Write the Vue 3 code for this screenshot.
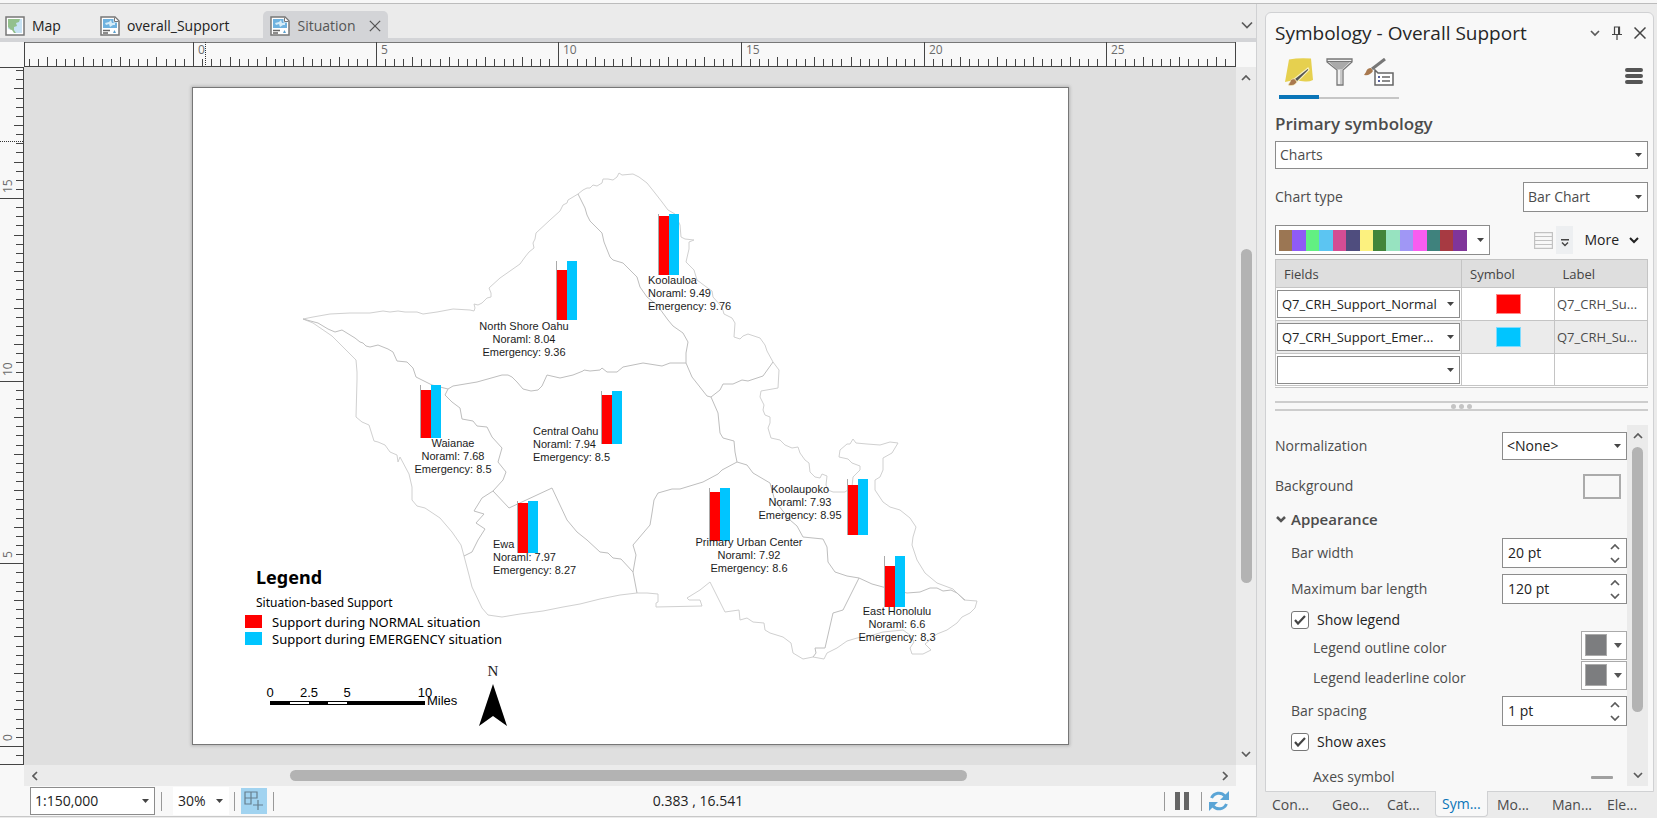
<script setup>
import { ref } from 'vue'

const UNIT = 36.53

function buildTicks(origin, from, to, direction) {
  const list = []
  for (let i = -20; i <= 120; i++) {
    const pos = origin + direction * i * (UNIT / 4)
    if (pos < from || pos > to) continue
    list.push({
      id: i,
      pos: Math.round(pos),
      size: i % 20 === 0 ? 25 : i % 4 === 0 ? 10 : 8,
      label: i % 20 === 0 ? String(i / 4) : ''
    })
  }
  return list
}
const topTicks = buildTicks(169, 3, 1210, 1)
const sideTicks = buildTicks(679, 2, 695, -1)

const tabs = [
  { name: 'Map', kind: 'map' },
  { name: 'overall_Support', kind: 'layout' },
  { name: 'Situation', kind: 'layout', active: true }
]

const coast =
  'M303 319L313 317L330 314L350 313L370 313L383 311L390 312L398 311L405 312L417 312L423 314L437 312L453 309L470 310L474 311L475 308L474 304L478 305L482 303L487 298L491 297L491 293L489 288L500 278L510 271L520 264L525 257L529 252L534 248L533 243L535 239L536 233L550 220L560 211L563 205L567 203L568 200L573 197L578 194L583 190L587 188L590 188L593 185L597 186L602 183L603 179L608 179L613 180L617 177L619 173L622 175L633 174L639 177L647 183L655 193L662 202L668 210L675 214L680 225L681 237L685 239L694 240L689 242L689 249L686 262L694 270L697 280L705 286L712 291L713 297L722 307L724 314L732 318L735 323L734 337L740 339L743 336L748 334L760 338L765 345L767 351L773 362L779 370L778 388L761 391L760 397L764 405L763 410L765 415L770 417L770 423L768 428L771 438L780 440L785 445L792 448L798 447L800 453L805 460L809 463L810 472L815 477L820 478L822 474L827 476L826 485L828 490L833 492L845 492L852 487L853 477L860 470L860 466L852 463L848 459L839 457L840 450L847 444L850 444L853 439L856 443L867 444L880 445L890 442L898 443L895 448L892 453L883 458L883 470L880 477L875 480L875 490L883 502L890 507L900 510L910 518L916 527L913 537L912 545L917 560L925 573L937 583L953 589L964 600L977 601L975 608L970 613L962 617L957 623L947 630L937 634L930 640L925 644L931 650L923 654L912 654L910 648L914 642L910 635L903 630L893 631L883 632L873 635L857 638L847 641L837 648L827 653L824 659L813 657L803 659L793 653L791 643L783 637L770 633L765 630L764 623L753 622L747 618L740 620L739 610L725 612L718 598L710 582L700 590L687 598L689 600L700 600L702 606L656 607L656 603L658 602L658 594L647 593L637 593L620 595L600 599L580 604L563 607L543 611L520 614L502 617L488 615L482 608L472 587L469 575L464 556L461 545L452 532L440 518L425 508L417 506L412 500L412 487L409 474L400 457L398 462L397 455L390 452L385 445L378 442L374 441L369 425L362 422L356 417L357 380L357 372L356 360L343 347L332 336L313 323Z'

const boundaries = [
  'M303 319L318 323L328 329L335 332L342 330L355 338L360 342L363 343L366 346L370 347L378 345L388 349L393 352L397 361L407 362L413 368L416 377L432 385L448 389',
  'M448 389L445 395L452 402L460 408L462 419L473 421L477 426L487 427L492 437L502 448L498 462L506 472L503 480L493 491L482 498L474 511L484 514L476 523L485 529L478 540L472 552L464 556',
  'M493 491L509 508L552 488L567 520L577 532L587 540L600 552L608 553L613 558L621 559L633 572L637 593',
  'M633 572L636 555L633 545L650 525L652 513L654 500L658 493L672 489L680 489L703 482L718 474L722 470L737 462',
  'M448 389L453 386L477 382L502 375L508 375L512 377L517 382L523 389L531 391L538 390L542 386L547 375L560 378L573 375L583 371L584 370L590 371L600 370L602 368L607 372L617 372L623 367L643 363L662 366L670 363L686 363',
  'M578 194L585 208L587 215L590 221L602 233L604 242L610 257L613 260L623 263L637 277L640 287L647 297L657 305L668 320L673 326L683 333L688 342L686 353L686 363L692 377L707 396L711 397L718 413L720 433L723 438L734 441L735 452L737 462',
  'M711 397L720 390L723 384L733 384L742 380L748 381L763 376L773 362',
  'M737 462L747 465L753 473L770 483L775 501L790 520L797 526L803 537L823 539L827 547L828 562L835 572L847 576L859 578L872 584L883 587L907 593L920 592L930 588L937 588L943 591L951 590L957 593L965 600',
  'M859 578L848 600L843 610L833 613L825 648L815 648L816 653L813 657'
]

const charts = [
  { name: 'North Shore Oahu', normal: '8.04', emergency: '9.36', x: 556, base: 320, nh: 50, eh: 59, lx: 524, ly: 330, anchor: 'middle' },
  { name: 'Koolauloa', normal: '9.49', emergency: '9.76', x: 658, base: 275, nh: 59, eh: 61, lx: 648, ly: 284, anchor: 'start' },
  { name: 'Central Oahu', normal: '7.94', emergency: '8.5', x: 601, base: 444, nh: 49, eh: 53, lx: 533, ly: 435, anchor: 'start' },
  { name: 'Waianae', normal: '7.68', emergency: '8.5', x: 420, base: 438, nh: 48, eh: 53, lx: 453, ly: 447, anchor: 'middle' },
  { name: 'Ewa', normal: '7.97', emergency: '8.27', x: 517, base: 553, nh: 50, eh: 52, lx: 493, ly: 548, anchor: 'start' },
  { name: 'Primary Urban Center', normal: '7.92', emergency: '8.6', x: 709, base: 541, nh: 49, eh: 53, lx: 749, ly: 546, anchor: 'middle' },
  { name: 'Koolaupoko', normal: '7.93', emergency: '8.95', x: 847, base: 535, nh: 50, eh: 56, lx: 800, ly: 493, anchor: 'middle' },
  { name: 'East Honolulu', normal: '6.6', emergency: '8.3', x: 884, base: 607, nh: 41, eh: 51, lx: 897, ly: 615, anchor: 'middle' }
]

const ramp = ['#9b7653', '#8f5bf5', '#62f082', '#5cc5f2', '#d44d94', '#4f4d7e', '#fcf17f', '#42843a', '#97e3c0', '#a097f5', '#f95df0', '#3f827d', '#a73a42', '#80359a']

const fields = [
  { field: 'Q7_CRH_Support_Normal', tone: 'red', label: 'Q7_CRH_Su...' },
  { field: 'Q7_CRH_Support_Emer...', tone: 'blue', label: 'Q7_CRH_Su...', selected: true },
  { field: '', tone: '', label: '' }
]

const barWidth = ref('20 pt')
const maxLength = ref('120 pt')
const barSpacing = ref('1 pt')
const showLegend = ref(true)
const showAxes = ref(true)
const paneTabs = ['Con...', 'Geo...', 'Cat...', 'Sym...', 'Mo...', 'Man...', 'Ele...']
</script>

<template>
  <div class="app">
    <div class="top-strip"></div>
    <div class="workspace">
      <main class="document">
        <nav class="tabs">
          <button v-for="t in tabs" :key="t.name" class="tab" :class="{ active: t.active }">
            <svg v-if="t.kind === 'map'" class="tab-icon" viewBox="0 0 20 20">
              <rect x="1" y="1" width="18" height="18" fill="#fff" stroke="#777" stroke-width="1.5" />
              <rect x="3" y="3" width="14" height="14" fill="#c7e2f3" />
              <path d="M3 3h12l-1 3-3 1 1 3-3 1v3l2 3H6l-1-4-2-2z" fill="#93c08c" />
              <path d="M3 13l4 1 2 3H3z" fill="#fff" />
            </svg>
            <svg v-else class="tab-icon" viewBox="0 0 20 20">
              <path d="M1 1h14l4 4v14H1z" fill="#fff" stroke="#777" stroke-width="1.5" />
              <path d="M3 3h10.500v3.500H17V12H3z" fill="#6fb2df" />
              <path d="M11 4l-2 2-4 1 1 2 3-1 1 3 3-2h2V7h-3z" fill="#d5ecf8" />
              <path d="M14.500 1.500v4h4" fill="#fff" stroke="#777" />
              <path d="M3 14.500h7M3 17h5" stroke="#666" stroke-width="1.300" />
              <path d="M13 17l1.500-3 1.500 3z" fill="#5b9fce" />
            </svg>
            <span>{{ t.name }}</span>
            <svg v-if="t.active" class="close" viewBox="0 0 14 14"><path d="M1 1l12 12M13 1L1 13" stroke="#555" stroke-width="1.500" /></svg>
          </button>
          <button class="tab-menu" aria-label="Open views"><svg width="12" height="8" viewBox="0 0 12 8"><path d="M1 1.500l5 5 5-5" class="stroke" /></svg></button>
        </nav>
        <div class="view">
          <div class="corner"></div>
          <svg class="ruler-top">
            <line x1="0" x2="100%" y1="0.500" y2="0.500" stroke="#777" />
            <line x1="0" x2="100%" y1="24.500" y2="24.500" stroke="#444" />
            <line x1="0.500" x2="0.500" y1="0" y2="25" stroke="#444" />
            <line x1="100%" x2="100%" y1="0" y2="25" stroke="#444" stroke-width="2" />
            <g v-for="t in topTicks" :key="t.id">
              <rect :x="t.pos" :y="25 - t.size" width="1" :height="t.size" fill="#444" />
              <text v-if="t.label" :x="t.pos + 5" y="12" class="ruler-text">{{ t.label }}</text>
            </g>
            <line x1="181.500" x2="181.500" y1="0" y2="24" stroke="#333" stroke-dasharray="1 1" />
          </svg>
          <div class="corner"></div>
          <svg class="ruler-side">
            <line x1="23.500" x2="23.500" y1="0" y2="100%" stroke="#444" />
            <line x1="0" x2="24" y1="0.500" y2="0.500" stroke="#444" />
            <line x1="0" x2="24" y1="100%" y2="100%" stroke="#444" stroke-width="2" />
            <g v-for="t in sideTicks" :key="t.id">
              <rect :x="24 - t.size" :y="t.pos" :width="t.size" height="1" fill="#444" />
              <text v-if="t.label" class="ruler-text" :transform="`translate(12 ${t.pos - 5}) rotate(-90)`">{{ t.label }}</text>
            </g>
            <line x1="0" x2="23" y1="74.500" y2="74.500" stroke="#333" stroke-dasharray="1 1" />
          </svg>
          <section class="canvas">
            <svg class="paper" viewBox="193 88 875 656" role="img" aria-label="Map layout">
              <path :d="coast" fill="none" stroke="#d0d0d0" />
              <path v-for="(d, i) in boundaries" :key="i" :d="d" fill="none" stroke="#bebebe" />
              <g v-for="c in charts" :key="c.name">
                <rect :x="c.x" :y="c.base - c.eh" width="1" :height="c.eh" fill="#aaa" />
                <rect :x="c.x + 1" :y="c.base - c.nh" width="10" :height="c.nh" fill="#f00" />
                <rect :x="c.x + 11" :y="c.base - c.eh" width="10" :height="c.eh" fill="#00c5ff" />
                <text class="map-label" :text-anchor="c.anchor">
                  <tspan :x="c.lx" :y="c.ly">{{ c.name }}</tspan>
                  <tspan :x="c.lx" :y="c.ly + 13">Noraml: {{ c.normal }}</tspan>
                  <tspan :x="c.lx" :y="c.ly + 26">Emergency: {{ c.emergency }}</tspan>
                </text>
              </g>
              <text x="256" y="584" class="legend-title">Legend</text>
              <text x="256" y="607" class="legend-sub">Situation-based Support</text>
              <rect x="245" y="615" width="17" height="13" fill="#f00" />
              <rect x="245" y="632" width="17" height="13" fill="#00c5ff" />
              <text x="272" y="627" class="legend-item">Support during NORMAL situation</text>
              <text x="272" y="644" class="legend-item">Support during EMERGENCY situation</text>
              <g class="scale-text">
                <text x="270" y="697" text-anchor="middle">0</text>
                <text x="309" y="697" text-anchor="middle">2.5</text>
                <text x="347" y="697" text-anchor="middle">5</text>
                <text x="425" y="697" text-anchor="middle">10</text>
                <text x="427" y="705">Miles</text>
              </g>
              <rect x="270" y="701" width="155" height="4" />
              <rect x="290" y="702" width="19" height="2" fill="#fff" />
              <rect x="328" y="702" width="19" height="2" fill="#fff" />
              <text x="493" y="676" class="north" text-anchor="middle">N</text>
              <path d="M493 684L507 726L493 716L479 726Z" />
            </svg>
          </section>
          <div class="scroll-v">
            <svg width="10" height="6" viewBox="0 0 10 6"><path d="M1 5l4-4 4 4" class="stroke" /></svg>
            <div class="track-v"><div class="thumb thumb-map-v"></div></div>
            <svg width="10" height="6" viewBox="0 0 10 6"><path d="M1 1l4 4 4-4" class="stroke" /></svg>
          </div>
          <div class="corner"></div>
          <div class="scroll-h">
            <svg width="6" height="10" viewBox="0 0 6 10"><path d="M5 1L1 5l4 4" class="stroke" /></svg>
            <div class="track-h"><div class="thumb thumb-map-h"></div></div>
            <svg width="6" height="10" viewBox="0 0 6 10"><path d="M1 1l4 4-4 4" class="stroke" /></svg>
          </div>
          <div class="corner"></div>
        </div>
        <footer class="status">
          <span class="select scale-select">
            <select aria-label="Map scale"><option>1:150,000</option></select>
            <svg class="arrow" viewBox="0 0 7 4"><path d="M0 0h7L3.500 4z" /></svg>
          </span>
          <i class="sep"></i>
          <span class="select zoom-select">
            <select aria-label="Page zoom"><option>30%</option></select>
            <svg class="arrow" viewBox="0 0 7 4"><path d="M0 0h7L3.500 4z" /></svg>
          </span>
          <i class="sep sep-zoom"></i>
          <button class="snap" aria-label="Snapping">
            <svg width="20" height="20" viewBox="0 0 20 20" fill="none" stroke="#667f8e" stroke-width="1.200"><path d="M1 1h12v6H1zM1 7v6h6V1M14 9v10M9 14h10" /></svg>
          </button>
          <i class="sep"></i>
          <span class="coords">0.383 , 16.541</span>
          <i class="sep"></i>
          <button class="plain pause" aria-label="Pause drawing"><svg width="14" height="18" viewBox="0 0 14 18"><path d="M0 0h5v18H0zM9 0h5v18H9z" fill="#666" /></svg></button>
          <i class="sep"></i>
          <button class="plain refresh" aria-label="Refresh">
            <svg width="20" height="20" viewBox="0 0 20 20"><path d="M2.500 7C5 1.500 12 .5 16 5" fill="none" stroke="#5ba5d6" stroke-width="3" /><path d="M20 0v9h-9z" fill="#5ba5d6" /><path d="M17.500 13C15 18.500 8 19.500 4 15" fill="none" stroke="#5ba5d6" stroke-width="3" /><path d="M0 20v-9h9z" fill="#5ba5d6" /></svg>
          </button>
        </footer>
      </main>

      <aside class="side">
        <div class="panel">
          <header class="panel-head">
            <h1>Symbology - Overall Support</h1>
            <button class="plain" aria-label="Panel menu"><svg width="10" height="7" viewBox="0 0 10 7"><path d="M1 1l4 4 4-4" class="stroke" /></svg></button>
            <button class="plain" aria-label="Auto hide"><svg width="10" height="14" viewBox="0 0 10 14"><path d="M2.500 8.500V1h5v7.500M0 8.500h10M5 8.500V14" fill="none" stroke="#444" stroke-width="1.200" /><path d="M6 1h1.500v7H6z" fill="#444" /></svg></button>
            <button class="plain" aria-label="Close panel"><svg width="12" height="12" viewBox="0 0 12 12"><path d="M.5.5l11 11M11.500.5L.5 11.500" stroke="#444" stroke-width="1.500" /></svg></button>
          </header>
          <div class="modes">
            <button class="mode on" aria-label="Primary symbology">
              <svg width="28" height="28" viewBox="0 0 28 28"><path d="M4 1.500q10-2 22-1L28 22q-4 2-8 1.500t-9-1T0 24z" fill="#e6d04f" /><path d="M23 10L9 21l3 3L24 12z" fill="#555" stroke="#f8f1c0" stroke-width="1.200" /><path d="M10 21q-4-1-5 3l-2 3q6 2 9-3z" fill="#a9794f" stroke="#f8f1c0" stroke-width=".7" /></svg>
            </button>
            <button class="mode" aria-label="Vary symbology">
              <svg width="27" height="28" viewBox="0 0 27 28"><path d="M1 1h25v3l-9 8v15h-6V12L1 4z" fill="#efefef" stroke="#777" stroke-width="1.300" /><path d="M3 4h21l-8 7.500h-5z" fill="#aaa" /><path d="M1 3.500h25" stroke="#777" /><path d="M14 12h2v14h-2z" fill="#c9c9c9" /></svg>
            </button>
            <button class="mode" aria-label="Symbol display">
              <svg width="30" height="28" viewBox="0 0 30 28"><path d="M21 1L8 11" stroke="#777" stroke-width="3" /><path d="M7 10q-4 0-5 4l-2 3q6 1 9-4z" fill="#a9794f" /><path d="M11 12l3 3h15v12H11z" fill="#fff" stroke="#666" stroke-width="1.500" /><path d="M14 19h2M14 23h2" stroke="#555f9c" stroke-width="2" /><path d="M18 19h8M18 23h8" stroke="#666" stroke-width="1.500" /></svg>
            </button>
            <button class="plain burger" aria-label="Options"><svg width="18" height="16" viewBox="0 0 18 16"><path d="M2 2h14M2 8h14M2 14h14" stroke="#555" stroke-width="4" stroke-linecap="round" /></svg></button>
          </div>
          <h2>Primary symbology</h2>
          <span class="select wide">
            <select aria-label="Primary symbology"><option>Charts</option></select>
            <svg class="arrow" viewBox="0 0 7 4"><path d="M0 0h7L3.500 4z" /></svg>
          </span>
          <div class="chart-type">
            <label for="chart-type">Chart type</label>
            <span class="select tall">
              <select id="chart-type"><option>Bar Chart</option></select>
              <svg class="arrow" viewBox="0 0 7 4"><path d="M0 0h7L3.500 4z" /></svg>
            </span>
          </div>
          <div class="scheme">
            <button class="ramp" aria-label="Color scheme">
              <span class="ramp-bar"><i v-for="c in ramp" :key="c" :style="{ background: c }"></i></span>
              <svg class="arrow" viewBox="0 0 7 4"><path d="M0 0h7L3.500 4z" /></svg>
            </button>
            <button class="plain grid-btn" aria-label="Add values"><svg width="19" height="17" viewBox="0 0 19 17" fill="none" stroke="#c2c2c2" stroke-width="1.200"><path d="M.6.6h17.800v15.800H.6zM1 4.500h17M1 8.500h17M1 12.500h17" /></svg></button>
            <button class="expand" aria-label="Add options"><svg width="8" height="8" viewBox="0 0 8 8"><path d="M0 .7h8M1 3.500l3 3 3-3" fill="none" stroke="#444" stroke-width="1.400" /></svg></button>
            <button class="plain more">More <svg width="10" height="7" viewBox="0 0 10 7"><path d="M1 1l4 4 4-4" fill="none" stroke="#222" stroke-width="2" /></svg></button>
          </div>
          <table>
            <thead>
              <tr><th>Fields</th><th>Symbol</th><th>Label</th></tr>
            </thead>
            <tbody>
              <tr v-for="(f, i) in fields" :key="i" :class="{ selected: f.selected }">
                <td>
                  <span class="select field">
                    <select :aria-label="`Field ${i + 1}`"><option>{{ f.field }}</option></select>
                    <svg class="arrow" viewBox="0 0 7 4"><path d="M0 0h7L3.500 4z" /></svg>
                  </span>
                </td>
                <td><button v-if="f.tone" class="swatch" :class="f.tone" :aria-label="`Symbol ${i + 1}`"></button></td>
                <td>{{ f.label }}</td>
              </tr>
            </tbody>
          </table>
          <div class="splitter"><i></i><i></i><i></i></div>
          <div class="options">
            <div class="rows">
              <div class="row r-norm">
                <label for="norm">Normalization</label>
                <span class="select num"><select id="norm" class="dark"><option>&lt;None&gt;</option></select><svg class="arrow" viewBox="0 0 7 4"><path d="M0 0h7L3.500 4z" /></svg></span>
              </div>
              <div class="row r-back"><label for="back">Background</label><button id="back" class="back-btn"></button></div>
              <h3><svg width="10" height="7" viewBox="0 0 10 7"><path d="M1 1l4 4 4-4" fill="none" stroke="#555" stroke-width="2.500" /></svg>Appearance</h3>
              <div class="row in r-width">
                <label for="bw">Bar width</label>
                <span class="spin"><input id="bw" v-model="barWidth" type="text" /><span class="steps"><button aria-label="Increase bar width"><svg viewBox="0 0 10 6"><path d="M1 5l4-4 4 4" class="stroke" /></svg></button><button aria-label="Decrease bar width"><svg viewBox="0 0 10 6"><path d="M1 1l4 4 4-4" class="stroke" /></svg></button></span></span>
              </div>
              <div class="row in r-len">
                <label for="ml">Maximum bar length</label>
                <span class="spin"><input id="ml" v-model="maxLength" type="text" /><span class="steps"><button aria-label="Increase bar length"><svg viewBox="0 0 10 6"><path d="M1 5l4-4 4 4" class="stroke" /></svg></button><button aria-label="Decrease bar length"><svg viewBox="0 0 10 6"><path d="M1 1l4 4 4-4" class="stroke" /></svg></button></span></span>
              </div>
              <label class="check c-legend"><input v-model="showLegend" type="checkbox" /><svg v-if="showLegend" class="tick" viewBox="0 0 12 10"><path d="M1 5l3 3.500L11 1" /></svg><span>Show legend</span></label>
              <div class="row in2 r-color"><label for="oc">Legend outline color</label><button id="oc" class="color"><i></i><svg viewBox="0 0 8 5"><path d="M0 0h8L4 5z" /></svg></button></div>
              <div class="row in2 r-color"><label for="lc">Legend leaderline color</label><button id="lc" class="color"><i></i><svg viewBox="0 0 8 5"><path d="M0 0h8L4 5z" /></svg></button></div>
              <div class="row in r-norm">
                <label for="bs">Bar spacing</label>
                <span class="spin"><input id="bs" v-model="barSpacing" type="text" /><span class="steps"><button aria-label="Increase bar spacing"><svg viewBox="0 0 10 6"><path d="M1 5l4-4 4 4" class="stroke" /></svg></button><button aria-label="Decrease bar spacing"><svg viewBox="0 0 10 6"><path d="M1 1l4 4 4-4" class="stroke" /></svg></button></span></span>
              </div>
              <label class="check"><input v-model="showAxes" type="checkbox" /><svg v-if="showAxes" class="tick" viewBox="0 0 12 10"><path d="M1 5l3 3.500L11 1" /></svg><span>Show axes</span></label>
              <div class="row in2 r-axes"><label for="ax">Axes symbol</label><button id="ax" class="plain axis-btn"><svg width="22" height="3"><rect width="22" height="3" rx="1" fill="#a0a0a0" /></svg></button></div>
            </div>
            <div class="scroll-v options-scroll">
              <svg width="10" height="6" viewBox="0 0 10 6"><path d="M1 5l4-4 4 4" class="stroke" /></svg>
              <div class="track-v"><div class="thumb thumb-options"></div></div>
              <svg width="10" height="6" viewBox="0 0 10 6"><path d="M1 1l4 4 4-4" class="stroke" /></svg>
            </div>
          </div>
        </div>
        <nav class="pane-tabs">
          <button v-for="p in paneTabs" :key="p" :class="{ on: p === 'Sym...' }">{{ p }}</button>
        </nav>
      </aside>
    </div>
  </div>
</template>

<style>
body { background: #ebebeb; }
</style>

<style scoped>
* { box-sizing: border-box; }
.app { height: 100vh; display: flex; flex-direction: column; background: #ebebeb; color: #4c4c4c; font: 14px/20px "Open Sans", "Noto Sans", sans-serif; overflow: hidden; }
.app svg { display: block; flex: none; }
button, input, select { font: inherit; color: inherit; margin: 0; padding: 0; border-radius: 0; }
button { border: 0; background: none; }
.stroke { fill: none; stroke: #5a5a5a; stroke-width: 1.7; }
.top-strip { height: 4px; background: #f7f7f7; border-bottom: 1px solid #bcbcbc; flex: none; }
.workspace { flex: 1; min-height: 0; display: flex; gap: 8px; padding-right: 3px; }
.document { flex: 1; min-width: 0; display: flex; flex-direction: column; margin-bottom: 1px; border-right: 1px solid #d0d1d3; border-bottom: 1px solid #c8c8c8; background: #f8f8f8; }

.tabs { height: 38px; display: flex; align-items: flex-end; background: #ebebeb; border-bottom: 4px solid #d3d4d7; padding-right: 1px; flex: none; }
.tab { height: 27px; display: flex; align-items: center; gap: 7px; padding: 3px 25px 0 5px; margin-right: 9px; color: #222; }
.tab.active { background: #d3d4d7; border-radius: 5px 5px 0 0; color: #555; padding: 3px 7px 0; margin-right: auto; }
.tab-icon { width: 20px; height: 20px; }
.close { width: 12px; height: 12px; margin-left: 6px; }
.tab-menu { width: 14px; height: 27px; display: flex; align-items: center; padding-top: 1px; }

.view { flex: 1; min-height: 0; display: grid; grid-template-columns: 24px 1fr 20px; grid-template-rows: 25px 1fr 21px; }
.ruler-top { width: 100%; height: 25px; overflow: hidden; }
.ruler-side { width: 24px; height: 100%; overflow: hidden; }
.ruler-text { font-size: 12px; fill: #6b6b6b; }
.canvas { background: #dfdfdf; display: flex; align-items: center; justify-content: center; overflow: hidden; min-width: 0; min-height: 0; }
.paper { width: 877px; background: #fff; border: 1px solid #777; box-shadow: 0 0 3px 1px #b5b5b5; }
.map-label { font: 11px "Liberation Sans", sans-serif; fill: #1c1c1c; }
.legend-title { font: bold 18px "Noto Sans", sans-serif; fill: #000; }
.legend-sub { font: 12px "Noto Sans", sans-serif; fill: #000; }
.legend-item { font: 13px "Noto Sans", sans-serif; fill: #000; }
.scale-text { font: 13px "Liberation Sans", sans-serif; }
.north { font: 15px "Liberation Serif", serif; fill: #222; }

.scroll-v { background: #ebebeb; display: flex; flex-direction: column; align-items: center; padding: 8px 0; min-height: 0; }
.track-v { flex: 1; width: 11px; margin: 8px 0; min-height: 0; }
.scroll-h { background: #ebebeb; display: flex; align-items: center; padding: 0 8px; min-width: 0; }
.track-h { flex: 1; height: 11px; margin: 0 8px; }
.thumb { background: #b3b3b3; border-radius: 6px; }
.thumb-map-v { height: 51%; margin-top: 160px; }
.thumb-map-h { width: 58%; height: 11px; margin-left: 244px; }

.status { height: 30px; display: flex; align-items: center; padding-left: 30px; color: #222; background: #f8f8f8; flex: none; }
.sep { width: 1px; height: 19px; background: #999; margin: 0 6px; }
.scale-select { width: 125px; height: 28px; }
.status .zoom-select { width: 56px; height: 28px; border-color: #fff; margin-left: 5px; }
.status .zoom-select select { padding-left: 4px; }
.sep-zoom { margin-left: 5px; }
.snap { width: 26px; height: 26px; background: #a1d3f0; display: flex; align-items: center; justify-content: center; }
.coords { flex: 1; text-align: center; padding-right: 42px; }
.plain { display: flex; align-items: center; justify-content: center; }
.pause { width: 20px; margin: 0 3px 0 1px; }
.refresh { margin: 0 27px 0 1px; }

.select { display: grid; grid-template: 1fr / 1fr auto; align-items: center; background: #fff; border: 1px solid #8c8c8c; }
.select select { grid-area: 1 / 1 / 2 / 3; appearance: none; border: 0; background: transparent; width: 100%; height: 100%; padding: 0 0 0 4px; }
.select .arrow { grid-area: 1 / 2; }
.arrow { width: 7px; height: 4px; margin-right: 5px; fill: #444; pointer-events: none; }
.select .dark { color: #222; }

.side { width: 389px; display: flex; flex-direction: column; flex: none; padding-top: 8px; }
.panel { flex: 1; min-height: 0; display: flex; flex-direction: column; background: #f8f8f8; border: 1px solid #d0d1d3; border-radius: 6px 6px 0 0; padding: 0 5px 5px 9px; }
.panel-head { height: 40px; display: flex; align-items: center; gap: 12px; padding-right: 2px; flex: none; }
h1 { flex: 1; font-size: 19px; font-weight: 400; line-height: 26px; margin: 0; color: #262626; }
.modes { display: flex; height: 46px; padding: 0 5px 0 4px; flex: none; }
.mode { width: 40px; height: 46px; border-bottom: 2px solid #c6c6c6; display: flex; align-items: flex-start; justify-content: center; padding-top: 5px; }
.mode.on { border-bottom: 4px solid #0a75b8; }
.burger { margin-left: auto; height: 46px; }
h2 { font-size: 17px; line-height: 24px; font-weight: 600; margin: 13px 0 5px; }
.wide { height: 28px; }
.chart-type { display: flex; justify-content: space-between; align-items: center; margin: 13px 0; }
.tall { width: 125px; height: 30px; }
.scheme { display: flex; align-items: center; }
.ramp { width: 215px; height: 30px; background: #fff; border: 1px solid #8c8c8c; display: flex; align-items: center; justify-content: space-between; padding-left: 3px; }
.ramp-bar { display: flex; width: 188px; height: 21px; }
.ramp-bar i { flex: 1; }
.grid-btn { margin-left: 44px; }
.expand { width: 17px; height: 28px; background: #edeff1; margin-left: 3px; display: flex; align-items: center; justify-content: center; padding-top: 6px; }
.more { gap: 10px; margin-left: auto; margin-right: 9px; color: #222; }
table { border-collapse: collapse; table-layout: fixed; width: 100%; margin-top: 4px; border: 1px solid #c4c4c4; border-bottom: 3px double #c4c4c4; font-size: 13px; flex: none; }
th { background: #dedede; height: 28px; text-align: left; font-weight: 400; padding: 0 8px; border-right: 1px solid #c4c4c4; color: #444; }
th:first-child { width: 186px; }
th:nth-child(2) { width: 93px; border-right: 0; }
td { height: 33px; padding: 0 2px; background: #fff; border: 1px solid #c4c4c4; }
td:first-child { padding: 0 1px; }
td:nth-child(2) { text-align: center; }
.selected td { background: #ebebeb; }
.field { height: 28px; color: #222; }
.swatch { width: 25px; height: 20px; display: block; margin: 0 auto; border: 1px solid #f88; }
.red { background: #f00; }
.blue { background: #00c5ff; border-color: #7fdcff; }
.splitter { height: 10px; margin: 13px 0 14px; border: solid #cdcdcd; border-width: 2px 0; display: flex; align-items: center; justify-content: center; gap: 3px; flex: none; }
.splitter i { width: 5px; height: 5px; border-radius: 50%; background: #c4c4c4; }
.options { flex: 1; min-height: 0; display: flex; overflow: hidden; }
.rows { flex: 1; min-width: 0; overflow: hidden; }
.row { display: flex; align-items: center; justify-content: space-between; }
.in { padding-left: 16px; }
.in2 { padding-left: 38px; }
.r-norm { height: 42px; }
.r-back { height: 38px; padding-right: 6px; }
.r-width { height: 40px; }
.r-len { height: 32px; }
.r-color { height: 30px; }
.r-color label { padding-top: 6px; }
.r-axes { height: 50px; padding-right: 14px; }
.num { width: 125px; height: 28px; }
.back-btn { width: 38px; height: 25px; border: 2px solid #ababab; }
h3 { display: flex; align-items: center; gap: 5px; height: 28px; font-size: 15px; font-weight: 600; margin: 0; padding-left: 1px; }
.spin { width: 125px; height: 30px; display: flex; background: #fff; border: 1px solid #8c8c8c; color: #222; }
.spin input { flex: 1; min-width: 0; border: 0; background: transparent; padding-left: 5px; }
.steps { width: 22px; display: flex; flex-direction: column; justify-content: space-between; padding: 5px 0 4px; }
.steps button { display: flex; justify-content: center; }
.steps svg { width: 10px; height: 6px; }
.check { display: grid; grid-template-columns: 18px 1fr; column-gap: 8px; align-items: center; justify-items: center; margin-left: 16px; color: #222; height: 20px; width: max-content; }
.check input { appearance: none; width: 18px; height: 18px; border: 1px solid #777; border-radius: 3px; background: #fff; grid-area: 1 / 1; }
.check span { grid-area: 1 / 2; }
.tick { grid-area: 1 / 1; width: 12px; height: 10px; fill: none; stroke: #444; stroke-width: 2.2; pointer-events: none; }
.c-legend { margin-top: 5px; }
.color { width: 46px; height: 29px; background: #fff; border: 1px solid #aaa; display: flex; align-items: center; justify-content: space-between; padding: 0 4px 0 3px; }
.color i { width: 22px; height: 22px; background: #7c7d7f; border: 1px solid #aaa; }
.color svg { width: 8px; height: 5px; fill: #555; }
.options-scroll { width: 21px; }
.thumb-options { height: 265px; max-height: 100%; }

.pane-tabs { height: 26px; display: grid; grid-template-columns: 60fr repeat(5, 55fr) 45fr; padding-left: 7px; margin-right: 2px; flex: none; }
.pane-tabs button { text-align: left; height: 26px; font-size: 14px; min-width: 0; white-space: nowrap; }
.pane-tabs .on { background: #f8f8f8; color: #0a75b8; border: 1px solid #d0d1d3; border-top: 0; border-radius: 0 0 4px 4px; margin: -1px 9px 0 -7px; padding-left: 6px; }
</style>
